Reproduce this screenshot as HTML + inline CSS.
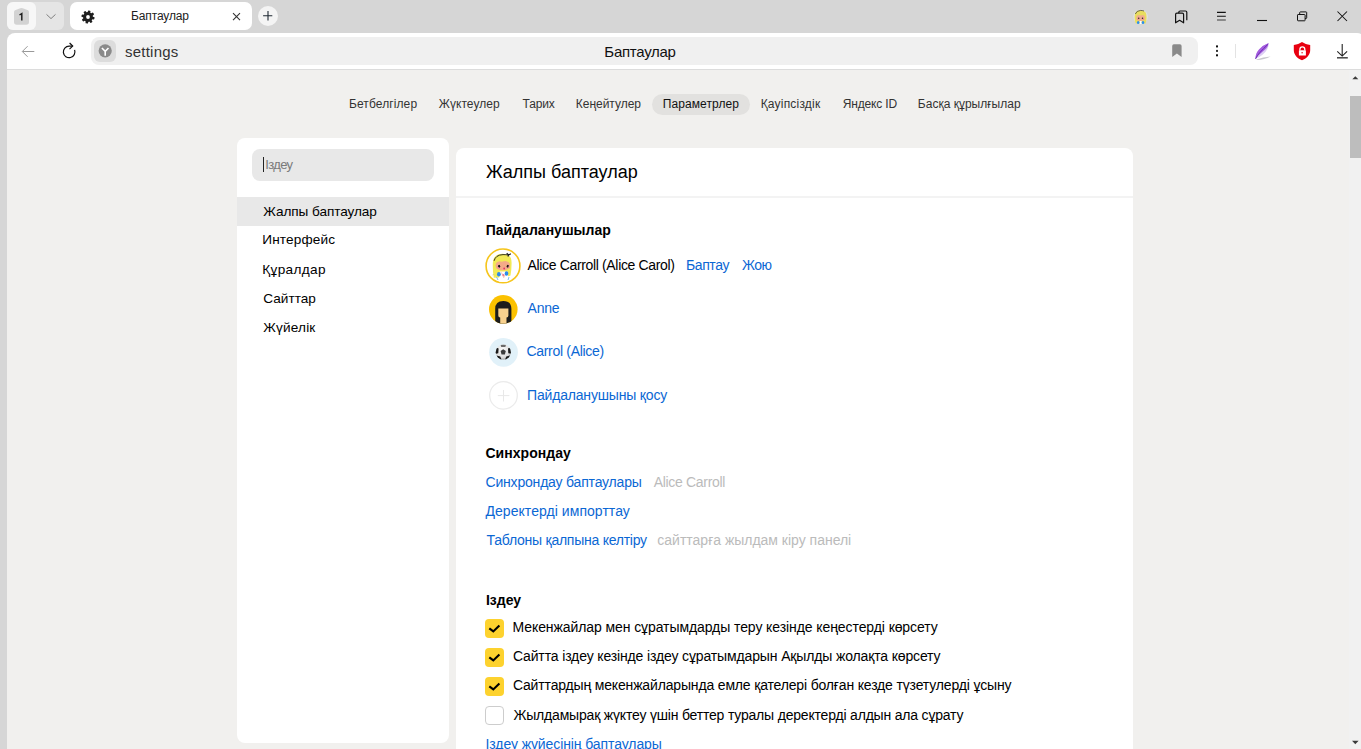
<!DOCTYPE html>
<html><head><meta charset="utf-8">
<style>
*{box-sizing:border-box;margin:0;padding:0}
html,body{width:1361px;height:749px;overflow:hidden}
body{background:#d6d6d6;font-family:"Liberation Sans",sans-serif;position:relative;color:#000}
.abs{position:absolute}
svg.abs{overflow:visible}
.t{position:absolute;white-space:nowrap;line-height:1}
#grp{left:7px;top:2px;width:57px;height:28px;background:#e5e5e5;border-radius:6px}
#grp1{left:7px;top:2px;width:29px;height:28px;background:#f7f7f7;border-radius:6px}
#tab{left:70px;top:2px;width:182px;height:28px;background:#fff;border-radius:7px}
#plus{left:258px;top:6px;width:20px;height:20px;background:#f4f4f4;border-radius:50%}
#toolbar{left:7px;top:33px;width:1358px;height:37px;background:#fff;border-radius:8px 8px 0 0;border-bottom:1px solid #dcdcdc}
#addr{left:91px;top:37px;width:1107px;height:28px;background:#f0f0f0;border-radius:8px}
#ybox{left:94px;top:40px;width:22px;height:22px;background:#dcdcdc;border-radius:6px}
#page{left:7px;top:70px;width:1354px;height:679px;background:#f1f0ee}
#track{left:1349px;top:70px;width:12px;height:679px;background:#f1f1f1}
#sb{left:237px;top:138px;width:212px;height:605px;background:#fff;border-radius:8px}
#main{left:456px;top:148px;width:677px;height:700px;background:#fff;border-radius:8px}
#pill{left:652px;top:94px;width:98px;height:21px;background:#e2e1df;border-radius:11px}
#search{left:252px;top:149px;width:182px;height:32px;background:#e8e8e8;border-radius:8px}
#cursor{left:263px;top:157px;width:1px;height:15px;background:#222}
#act{left:237px;top:197px;width:212px;height:29px;background:#e8e8e8}
#hdrline{left:456px;top:196px;width:677px;height:2px;background:#f3f3f3}
#thumb{left:1350px;top:96px;width:11px;height:62px;background:#bdbdbd}
.chk{position:absolute;left:485px;width:19px;height:19px;border-radius:4px;background:#fdd22e}
.chk svg{position:absolute;left:0;top:0}
.unchk{background:#fff;border:1px solid #cdcdcd}
</style></head><body>
<div id="grp" class="abs"></div>
<div id="grp1" class="abs"></div>
<!-- badge 1 -->
<svg class="abs" style="left:0;top:0" width="70" height="32">
 <path d="M14 12.2 Q14 11 15 10.3 L20.3 8.2 Q21.5 7.8 22.7 8.2 L28 10.3 Q29 11 29 12.2 L29 22 Q29 24.8 26.2 24.8 L16.8 24.8 Q14 24.8 14 22 Z" fill="#d3d3d3"/>
 <path d="M19.5 15 L21.8 13.6 L21.8 20.6" fill="none" stroke="#1e1e1e" stroke-width="1.45" stroke-linejoin="miter"/>
 <path d="M46.5 14.4 L51 18.6 L55.5 14.4" fill="none" stroke="#808080" stroke-width="1"/>
</svg>
<div id="tab" class="abs"></div>
<!-- gear -->
<svg class="abs" style="left:78px;top:7px" width="20" height="20" viewBox="-10 -10 20 20">
 <g transform="rotate(12)" fill="#1e1e1e">
  <rect x="-1.3" y="-6.6" width="2.6" height="13.2" rx="0.8"/>
  <rect x="-1.3" y="-6.6" width="2.6" height="13.2" rx="0.8" transform="rotate(45)"/>
  <rect x="-1.3" y="-6.6" width="2.6" height="13.2" rx="0.8" transform="rotate(90)"/>
  <rect x="-1.3" y="-6.6" width="2.6" height="13.2" rx="0.8" transform="rotate(135)"/>
  <circle r="4.9"/>
 </g>
 <circle cx="0" cy="0" r="1.9" fill="#fff"/>
</svg>
<!-- tab close -->
<svg class="abs" style="left:226px;top:6px" width="20" height="20">
 <path d="M7 7.2 L14 14.2 M14 7.2 L7 14.2" stroke="#333" stroke-width="1.1" fill="none"/>
</svg>
<div id="plus" class="abs"></div>
<svg class="abs" style="left:258px;top:6px" width="20" height="20">
 <path d="M10 5 V14.6 M5.1 9.8 H14.3" stroke="#1f2933" stroke-width="1.1" fill="none"/>
</svg>
<!-- titlebar right icons -->
<svg class="abs" style="left:1130px;top:6px" width="22" height="22" viewBox="0 0 22 22">
 <circle cx="10.6" cy="10.8" r="7.2" fill="#e4e4e4"/>
 <path d="M4.6 11 Q4.2 4.4 10.6 4.2 Q17 4.4 16.6 11 Q16.6 15.5 15.5 17.5 L5.8 17.5 Q4.6 15.5 4.6 11 Z" fill="#e9dd5e"/>
 <path d="M6.3 11.8 Q6.3 8.6 10.6 8.5 Q14.9 8.6 14.9 11.8 Q14.9 15 10.6 15 Q6.3 15 6.3 11.8 Z" fill="#f0ac8f"/>
 <path d="M5.8 10.4 Q8 8.2 10.8 9.4 Q13.5 8.2 15.6 10.2 L15.6 7.5 Q10.6 4.5 5.8 7.6 Z" fill="#e9dd5e"/>
 <path d="M5.3 8 Q6.5 4.6 10.6 4.4 Q12.5 4.4 14 5" fill="none" stroke="#333" stroke-width="0.7"/>
 <circle cx="8.7" cy="12.2" r="0.75" fill="#222"/><circle cx="12.5" cy="12.2" r="0.75" fill="#222"/>
 <circle cx="7.8" cy="13.3" r="0.7" fill="#f47b8e" opacity="0.7"/><circle cx="13.4" cy="13.3" r="0.7" fill="#f47b8e" opacity="0.7"/>
 <path d="M10.6 15 L10.6 18" stroke="#fff" stroke-width="2"/>
 <ellipse cx="8.2" cy="16.5" rx="1.3" ry="1.5" fill="#2a8ff0"/><ellipse cx="13" cy="16.5" rx="1.3" ry="1.5" fill="#2a8ff0"/>
</svg>
<svg class="abs" style="left:1170px;top:6px" width="22" height="22" viewBox="0 0 22 22">
 <path d="M8.8 7.2 V6.3 Q8.8 5 10.1 5 L15.5 5 Q16.8 5 16.8 6.3 V14.2" fill="none" stroke="#111" stroke-width="1.2"/>
 <path d="M5.6 16.8 V8.5 Q5.6 7.2 6.9 7.2 L12.3 7.2 Q13.6 7.2 13.6 8.5 V16.8 L9.6 14.3 Z" fill="none" stroke="#111" stroke-width="1.2" stroke-linejoin="round"/>
</svg>
<svg class="abs" style="left:1210px;top:6px" width="22" height="22">
 <path d="M7 6.4 H15.8 M7 10.2 H15.8" stroke="#111" stroke-width="1.1"/>
 <path d="M7 14 H15.8" stroke="#777" stroke-width="1.6"/>
</svg>
<svg class="abs" style="left:1250px;top:6px" width="22" height="22">
 <path d="M7 14.5 H17" stroke="#111" stroke-width="1.1"/>
</svg>
<svg class="abs" style="left:1290px;top:6px" width="22" height="22">
 <rect x="7.5" y="8.5" width="7.6" height="6.3" rx="0.6" fill="#d6d6d6" stroke="#111" stroke-width="1"/>
 <path d="M9.7 8.5 V6.6 Q9.7 5.9 10.4 5.9 H16 Q16.7 5.9 16.7 6.6 V11.8 Q16.7 12.5 16 12.5 H15.1" fill="none" stroke="#111" stroke-width="1"/>
</svg>
<svg class="abs" style="left:1330px;top:6px" width="22" height="22">
 <path d="M7.5 5.5 L17 15 M17 5.5 L7.5 15" stroke="#111" stroke-width="1.05"/>
</svg>

<div id="toolbar" class="abs"></div>
<!-- back / reload -->
<svg class="abs" style="left:15px;top:38px" width="30" height="28">
 <path d="M7.5 13.5 H19.3 M12.6 8.2 L7.3 13.5 L12.6 18.8" fill="none" stroke="#999" stroke-width="1"/>
</svg>
<svg class="abs" style="left:55px;top:38px" width="30" height="28">
 <path d="M17.6 8.1 H14.1 A5.8 5.8 0 1 0 19.6 11.9" fill="none" stroke="#111" stroke-width="1.2"/>
 <path d="M14.6 5 L17.7 8.1 L14.5 11.1" fill="none" stroke="#111" stroke-width="1.2"/>
</svg>
<div id="addr" class="abs"></div>
<div id="ybox" class="abs"></div>
<svg class="abs" style="left:94px;top:40px" width="22" height="22">
 <circle cx="11.2" cy="10.8" r="6.6" fill="#8a8a8a"/>
 <path d="M7.9 8 L11.2 11.3 L14.5 8 M11.2 11.3 V15.8" fill="none" stroke="#fff" stroke-width="1.6"/>
</svg>
<!-- bookmark -->
<svg class="abs" style="left:1165px;top:38px" width="24" height="24">
 <path d="M7.2 19 V8 Q7.2 6.3 8.9 6.3 H14.9 Q16.6 6.3 16.6 8 V19 L11.9 15.5 Z" fill="#8a8a8a"/>
</svg>
<svg class="abs" style="left:1205px;top:38px" width="24" height="24">
 <rect x="11" y="7.4" width="2" height="2" fill="#111"/>
 <rect x="11" y="11.9" width="2" height="2" fill="#333"/>
 <rect x="11" y="16.3" width="2" height="2" fill="#111"/>
</svg>
<div class="abs" style="left:1235px;top:44px;width:1px;height:14px;background:#e3e3e3"></div>
<!-- feather -->
<svg class="abs" style="left:1250px;top:38px" width="24" height="26">
 <path d="M6.5 21.6 Q13 19.2 20.5 18.6 Q14 22.2 6.5 22 Z" fill="#bdbdc4" opacity="0.85"/>
 <path d="M5.3 21.1 Q5.5 15.5 9 11.5 Q13 7.2 18.6 5.1 Q18.8 9 17.4 11 Q15.5 14.5 12.5 16.8 Q9.5 19.3 5.3 21.1 Z" fill="#dccdf3"/>
 <path d="M5.3 21.1 Q5.5 15.5 9 11.5 Q13 7.2 18.6 5.1 Q18.4 8 16.2 10.5 Q12 14 9.2 16.8 Q7 19 5.3 21.1 Z" fill="#a35bde"/>
 <path d="M5.6 20.8 Q7.5 17 9.8 14.6 Q13.5 10.5 17.8 6.4" fill="none" stroke="#6c2fb4" stroke-width="1"/>
</svg>
<!-- shield -->
<svg class="abs" style="left:1290px;top:38px" width="24" height="26">
 <path d="M12 4 C14.5 5.6 17 6.5 20.2 7 L20.2 12.2 C20.2 17 16.2 20.6 12 22.3 C7.8 20.6 3.8 17 3.8 12.2 L3.8 7 C7 6.5 9.5 5.6 12 4 Z" fill="#e80010"/>
 <path d="M9.9 12.6 V11.4 A2.45 2.45 0 0 1 14.8 11.4 V12.6" fill="none" stroke="#fff" stroke-width="1.3"/>
 <rect x="8.9" y="12.3" width="7" height="5.3" rx="0.4" fill="#fff"/>
 <circle cx="12.1" cy="14.7" r="0.7" fill="#e80010"/>
</svg>
<!-- download -->
<svg class="abs" style="left:1330px;top:38px" width="24" height="26">
 <path d="M12.2 6 V18 M7.3 13.3 L12.2 18.1 L17.1 13.3" fill="none" stroke="#222" stroke-width="1.1"/>
 <path d="M7 19.8 H17.8" stroke="#444" stroke-width="1.5"/>
</svg>

<div id="page" class="abs"></div>
<div id="track" class="abs"></div>
<div id="thumb" class="abs"></div>
<svg class="abs" style="left:1349px;top:70px" width="12" height="679">
 <path d="M3.3 9.2 L6.3 6.2 L9.3 9.2 Z" fill="#3a3a3a"/>
 <path d="M3 670.8 L6.3 674.2 L9.6 670.8 Z" fill="#3a3a3a"/>
</svg>
<div id="pill" class="abs"></div>
<div id="sb" class="abs"></div>
<div id="search" class="abs"></div>
<div id="cursor" class="abs"></div>
<div id="act" class="abs"></div>
<div id="main" class="abs"></div>
<div id="hdrline" class="abs"></div>

<!-- avatars -->
<svg class="abs" style="left:482px;top:244px" width="42" height="42" viewBox="0 0 42 42">
 <defs><clipPath id="alc"><circle cx="21" cy="21.9" r="16.2"/></clipPath></defs>
 <circle cx="21" cy="21.9" r="16.9" fill="#fff" stroke="#f6c51c" stroke-width="1.6"/>
 <g clip-path="url(#alc)">
 <path d="M10.8 20 Q10.5 10 20.5 9.8 Q30 10 29.6 19.5 Q29.5 27 28.5 31.5 Q24 33 18 33.5 L11.8 33.8 Q10.6 27 10.8 20 Z" fill="#f2ea55"/>
 <path d="M13.6 21.5 Q13.6 16.5 20.8 16.3 Q28 16.5 28 21.5 Q28 26.2 20.8 26.2 Q13.6 26.2 13.6 21.5 Z" fill="#f3aa88"/>
 <path d="M12.5 20 Q15 16 20 17.8 Q24.5 15.5 28.8 19.5 L28.8 14 Q21 8.5 12.5 14 Z" fill="#f2ea55"/>
 <path d="M12.1 16.8 Q13.5 11 21 10.6 Q24 10.6 26.4 11" fill="none" stroke="#1e1e1e" stroke-width="0.9"/>
 <path d="M24.7 9.2 L26.6 11 L28.9 9.8 M26.6 11 L25.9 12.6" fill="none" stroke="#1e1e1e" stroke-width="1.2"/>
 <ellipse cx="17.1" cy="22.2" rx="1.1" ry="1.5" fill="#111"/>
 <ellipse cx="25.8" cy="22.2" rx="1.1" ry="1.5" fill="#111"/>
 <circle cx="16.2" cy="23.8" r="1.1" fill="#f58da0" opacity="0.7"/>
 <circle cx="26.7" cy="23.4" r="1.1" fill="#f58da0" opacity="0.7"/>
 <circle cx="22.2" cy="24.5" r="0.9" fill="#e2306a"/>
 <path d="M17.5 27.5 H25.8 L26.5 38 H17 Z" fill="#fff"/>
 <path d="M19.5 28.5 L21.7 33.5 L24 28.5" fill="none" stroke="#f2a08c" stroke-width="0.7"/>
 <ellipse cx="16.9" cy="30.2" rx="1.9" ry="2.3" fill="#2d8bea"/>
 <ellipse cx="24.5" cy="29.5" rx="1.8" ry="2.2" fill="#2d8bea"/>
 <circle cx="21.3" cy="31" r="0.8" fill="#e2306a"/>
 <path d="M14.5 33 L16 36 M27 33 L26 36" stroke="#7cc0f0" stroke-width="1"/>
 <path d="M10.5 31 Q12 29.5 13 31.5" fill="none" stroke="#d9d27a" stroke-width="0.8"/>
 </g>
</svg>
<svg class="abs" style="left:482px;top:287px" width="42" height="42" viewBox="0 0 42 42">
 <defs><clipPath id="ac"><circle cx="21.3" cy="22.3" r="14.3"/></clipPath></defs>
 <circle cx="21.3" cy="22.3" r="14.3" fill="#fbc100"/>
 <g clip-path="url(#ac)">
  <path d="M13.2 40 V22 Q13.2 14 21.3 14 Q29.4 14 29.4 22 V40 Z" fill="#1c1c1c"/>
  <path d="M16.3 21.6 H26.4 V28.5 Q26.4 30.5 24.5 30.5 V40 H18.2 V30.5 Q16.3 30.5 16.3 28.5 Z" fill="#f8d18e"/>
 </g>
</svg>
<svg class="abs" style="left:482px;top:330px" width="42" height="42" viewBox="0 0 42 42">
 <defs><radialGradient id="bg1" cx="0.45" cy="0.35" r="0.7"><stop offset="0" stop-color="#fafafa"/><stop offset="0.7" stop-color="#dedede"/><stop offset="1" stop-color="#9a9a9a"/></radialGradient>
 <clipPath id="bc"><circle cx="21.3" cy="22.2" r="7.6"/></clipPath></defs>
 <circle cx="21.5" cy="22.3" r="14.4" fill="#e1f1f9"/>
 <circle cx="21.3" cy="22.2" r="7.6" fill="url(#bg1)"/>
 <g clip-path="url(#bc)">
 <path d="M18.6 21 L21.2 19.2 L23.8 21 L22.9 24.5 L19.5 24.5 Z" fill="#3c3c3c"/>
 <path d="M18.6 14.6 H24 L23.4 16.9 L19.2 16.9 Z" fill="#6a6a6a"/>
 <path d="M13 17 L16.6 18.4 L16.3 23.2 L13 24 Z M29.6 17 L26 18.4 L26.3 23.2 L29.6 24 Z" fill="#1a1a1a"/>
 <path d="M14.6 25.5 L18.3 26.5 L19.6 29.8 L14 29.8 Z M28 25.5 L24.3 26.5 L23 29.8 L28.6 29.8 Z" fill="#1a1a1a"/>
 </g>
</svg>
<svg class="abs" style="left:482px;top:373px" width="42" height="42" viewBox="0 0 42 42">
 <circle cx="21.5" cy="22.4" r="13.8" fill="#fff" stroke="#ebebeb" stroke-width="1.3"/>
 <path d="M21.5 17 V28.5 M15.8 22.6 H27.4" stroke="#e8e8e8" stroke-width="1"/>
</svg>

<div class="chk" style="top:619px"><svg width="19" height="19"><path d="M4.3 9.3 L8.3 12.4 L14.4 6.5" fill="none" stroke="#000" stroke-width="2.1"/></svg></div>
<div class="chk" style="top:648px"><svg width="19" height="19"><path d="M4.3 9.3 L8.3 12.4 L14.4 6.5" fill="none" stroke="#000" stroke-width="2.1"/></svg></div>
<div class="chk" style="top:677px"><svg width="19" height="19"><path d="M4.3 9.3 L8.3 12.4 L14.4 6.5" fill="none" stroke="#000" stroke-width="2.1"/></svg></div>
<div class="chk unchk" style="top:706px"></div>
<div class="t" style="left:131.00px;top:10px;font-size:12px;color:#222;letter-spacing:-0.125px;">Баптаулар</div>
<div class="t" style="left:125.05px;top:44px;font-size:15px;color:#333;letter-spacing:0.223px;">settings</div>
<div class="t" style="left:604.33px;top:44px;font-size:15px;color:#111;letter-spacing:-0.275px;">Баптаулар</div>
<div class="t" style="left:349.00px;top:98px;font-size:12px;color:#333;letter-spacing:0.100px;">Бетбелгілер</div>
<div class="t" style="left:438.83px;top:98px;font-size:12px;color:#333;letter-spacing:0.038px;">Жүктеулер</div>
<div class="t" style="left:522.57px;top:98px;font-size:12px;color:#333;letter-spacing:-0.175px;">Тарих</div>
<div class="t" style="left:575.87px;top:98px;font-size:12px;color:#333;letter-spacing:-0.033px;">Кеңейтулер</div>
<div class="t" style="left:662.68px;top:98px;font-size:12px;color:#111;letter-spacing:0.100px;">Параметрлер</div>
<div class="t" style="left:760.68px;top:98px;font-size:12px;color:#333;letter-spacing:0.200px;">Қауіпсіздік</div>
<div class="t" style="left:842.68px;top:98px;font-size:12px;color:#333;letter-spacing:-0.163px;">Яндекс ID</div>
<div class="t" style="left:917.87px;top:98px;font-size:12px;color:#333;">Басқа құрылғылар</div>
<div class="t" style="left:265.33px;top:158px;font-size:13px;color:#7a7a7a;letter-spacing:-0.675px;">Іздеу</div>
<div class="t" style="left:263.33px;top:205px;font-size:13.6px;color:#000;letter-spacing:-0.071px;">Жалпы баптаулар</div>
<div class="t" style="left:262.33px;top:233px;font-size:13.6px;color:#000;letter-spacing:0.125px;">Интерфейс</div>
<div class="t" style="left:262.33px;top:263px;font-size:13.6px;color:#000;letter-spacing:0.329px;">Құралдар</div>
<div class="t" style="left:263.33px;top:292px;font-size:13.6px;color:#000;">Сайттар</div>
<div class="t" style="left:263.33px;top:321px;font-size:13.6px;color:#000;letter-spacing:0.167px;">Жүйелік</div>
<div class="t" style="left:486.00px;top:163px;font-size:18px;color:#000;">Жалпы баптаулар</div>
<div class="t" style="left:485.73px;top:223px;font-size:14px;color:#000;font-weight:700;letter-spacing:0.015px;">Пайдаланушылар</div>
<div class="t" style="left:527.55px;top:258px;font-size:14px;color:#000;letter-spacing:-0.346px;">Alice Carroll (Alice Carol)</div>
<div class="t" style="left:686.00px;top:258px;font-size:14px;color:#0b67d4;letter-spacing:-0.400px;">Баптау</div>
<div class="t" style="left:742.00px;top:258px;font-size:14px;color:#0b67d4;letter-spacing:-0.500px;">Жою</div>
<div class="t" style="left:527.57px;top:301px;font-size:14px;color:#0b67d4;letter-spacing:-0.233px;">Anne</div>
<div class="t" style="left:526.47px;top:344px;font-size:14px;color:#0b67d4;letter-spacing:-0.308px;">Carrol (Alice)</div>
<div class="t" style="left:527.00px;top:388px;font-size:14px;color:#0b67d4;letter-spacing:-0.176px;">Пайдаланушыны қосу</div>
<div class="t" style="left:485.47px;top:446px;font-size:14px;color:#000;font-weight:700;letter-spacing:0.033px;">Синхрондау</div>
<div class="t" style="left:485.47px;top:475px;font-size:14px;color:#0b67d4;letter-spacing:-0.185px;">Синхрондау баптаулары</div>
<div class="t" style="left:653.65px;top:475px;font-size:14px;color:#bbbbbb;letter-spacing:-0.308px;">Alice Carroll</div>
<div class="t" style="left:485.47px;top:504px;font-size:14px;color:#0b67d4;letter-spacing:0.053px;">Деректерді импорттау</div>
<div class="t" style="left:486.57px;top:533px;font-size:14px;color:#0b67d4;letter-spacing:-0.245px;">Таблоны қалпына келтіру</div>
<div class="t" style="left:657.37px;top:533px;font-size:14px;color:#bbbbbb;letter-spacing:-0.011px;">сайттарға жылдам кіру панелі</div>
<div class="t" style="left:485.97px;top:593px;font-size:14px;color:#000;font-weight:700;">Іздеу</div>
<div class="t" style="left:512.50px;top:620px;font-size:14px;color:#000;letter-spacing:-0.085px;">Мекенжайлар мен сұратымдарды теру кезінде кеңестерді көрсету</div>
<div class="t" style="left:512.90px;top:649px;font-size:14px;color:#000;letter-spacing:-0.136px;">Сайтта іздеу кезінде іздеу сұратымдарын Ақылды жолақта көрсету</div>
<div class="t" style="left:512.90px;top:678px;font-size:14px;color:#000;letter-spacing:-0.161px;">Сайттардың мекенжайларында емле қателері болған кезде түзетулерді ұсыну</div>
<div class="t" style="left:513.50px;top:708px;font-size:14px;color:#000;letter-spacing:-0.190px;">Жылдамырақ жүктеу үшін беттер туралы деректерді алдын ала сұрату</div>
<div class="t" style="left:485.57px;top:737px;font-size:14px;color:#0b67d4;letter-spacing:-0.096px;">Іздеу жүйесінің баптаулары</div>
</body></html>
